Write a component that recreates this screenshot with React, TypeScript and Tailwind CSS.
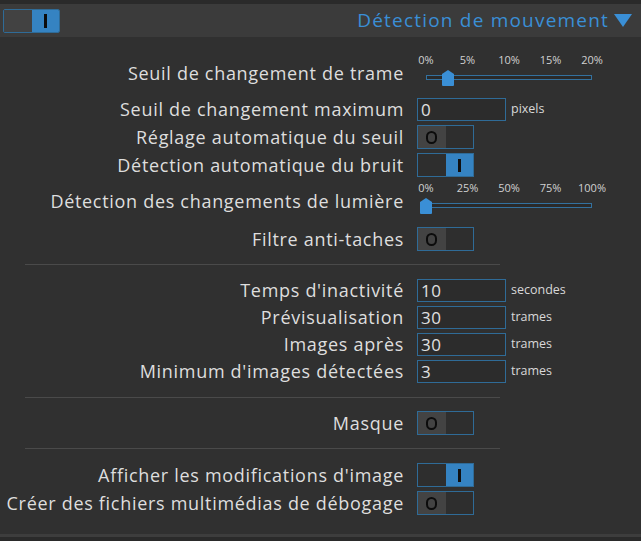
import React from 'react';

const font = "font-['Open_Sans','DejaVu_Sans',sans-serif]";

const Toggle: React.FC<{ on?: boolean; className?: string }> = ({ on, className }) => (
  <div className={`flex h-[24px] w-[57px] border border-[#2f6b97] ${className ?? ''}`}>
    {on ? (
      <>
        <div className="w-1/2 bg-[#2e2e2e]" />
        <div className="flex w-1/2 items-center justify-center bg-[#3583c2]">
          <div className="h-[13px] w-[3px] bg-[#101010]" />
        </div>
      </>
    ) : (
      <>
        <div className="flex w-1/2 items-center justify-center bg-[#434343]">
          <div className="h-[13px] w-[11px] rounded-full border-[2px] border-[#0c0c0c]" />
        </div>
        <div className="w-1/2 bg-[#2e2e2e]" />
      </>
    )}
  </div>
);

const Slider: React.FC<{ ticks: string[]; value: number }> = ({ ticks, value }) => (
  <div className="w-[190px] pl-[9px]">
    <div className="relative h-[14px] w-[166px] text-[11px] leading-[14px] text-[#d0d0d0]">
      {ticks.map((t, i) => (
        <span
          key={t}
          className="absolute top-0 -translate-x-1/2 whitespace-nowrap"
          style={{ left: `${(i / (ticks.length - 1)) * 100}%` }}
        >
          {t}
        </span>
      ))}
    </div>
    <div className="relative mt-[3px] flex h-[16px] w-[166px] items-center">
      <div className="h-[5px] w-full border border-[#33719f] bg-[#2a2a2a]" />
      <svg
        className="absolute top-0 -translate-x-1/2"
        style={{ left: `${value}%` }}
        width="12"
        height="16"
        viewBox="0 0 12 16"
      >
        <path d="M6 0 L12 4 L12 15 Q12 16 11 16 L1 16 Q0 16 0 15 L0 4 Z" fill="#3a8fd6" />
      </svg>
    </div>
  </div>
);

const Input: React.FC<{ value: string; unit: string }> = ({ value, unit }) => (
  <div className="flex items-center">
    <div className="flex h-[23px] w-[89px] items-center border border-[#2f6b97] bg-[#2c2c2c] px-[3px] text-[17px] tracking-[0.5px] text-[#e0e0e0]">
      {value}
    </div>
    <span className="ml-[5px] text-[12.5px] text-[#d8d8d8]">{unit}</span>
  </div>
);

const Row: React.FC<{ label: string; children: React.ReactNode; className?: string; labelClass?: string }> = ({
  label,
  children,
  className,
  labelClass,
}) => (
  <div className={`flex items-center ${className ?? ''}`}>
    <div
      className={`w-[405px] shrink-0 whitespace-nowrap pr-[1px] text-right text-[18px] tracking-[0.7px] text-[#dedede] ${labelClass ?? ''}`}
    >
      {label}
    </div>
    <div className="pl-[12px]">{children}</div>
  </div>
);

const Divider: React.FC<{ className?: string }> = ({ className }) => (
  <div className={`mx-[25px] h-px w-[475px] bg-[#4a4a4a] ${className ?? ''}`} />
);

export default function App() {
  return (
    <div className={`h-[541px] w-[641px] overflow-hidden bg-[#2a2a2a] ${font}`}>
      <div className="h-[4px]" />
      <div className="flex h-[33px] items-center justify-between bg-[#3b3b3b] pl-[3px] pr-[9px]">
        <div className="flex h-[24px] w-[57px] overflow-hidden rounded-[2px] border border-[#2f6b97]">
          <div className="w-1/2 bg-[#424242]" />
          <div className="flex w-1/2 items-center justify-center bg-[#3583c2]">
            <div className="h-[14px] w-[3px] bg-[#0c0c0c]" />
          </div>
        </div>
        <div className="flex items-center gap-[5px] text-[19px] tracking-[1.2px] text-[#3a8fd6]">
          <span>Détection de mouvement</span>
          <svg width="18" height="13" viewBox="0 0 18 13">
            <path d="M0 0 L18 0 L9 13 Z" fill="#3a8fd6" />
          </svg>
        </div>
      </div>
      <div className="flex h-[497px] flex-col bg-[#303030] pt-[15px]">
        <Row label="Seuil de changement de trame" className="h-[34px]" labelClass="pt-[8px]">
          <Slider ticks={['0%', '5%', '10%', '15%', '20%']} value={13.5} />
        </Row>
        <Row label="Seuil de changement maximum" className="mt-[12px] h-[23px]">
          <Input value="0" unit="pixels" />
        </Row>
        <Row label="Réglage automatique du seuil" className="mt-[4px] h-[24px]">
          <Toggle />
        </Row>
        <Row label="Détection automatique du bruit" className="mt-[4px] h-[24px]">
          <Toggle on />
        </Row>
        <Row label="Détection des changements de lumière" className="mt-[3px] h-[34px]" labelClass="pt-[8px]">
          <Slider ticks={['0%', '25%', '50%', '75%', '100%']} value={0} />
        </Row>
        <Row label="Filtre anti-taches" className="mt-[13px] h-[24px]">
          <Toggle />
        </Row>
        <Divider className="mt-[13px]" />
        <Row label="Temps d'inactivité" className="mt-[14px] h-[23px]">
          <Input value="10" unit="secondes" />
        </Row>
        <Row label="Prévisualisation" className="mt-[4px] h-[23px]">
          <Input value="30" unit="trames" />
        </Row>
        <Row label="Images après" className="mt-[4px] h-[23px]">
          <Input value="30" unit="trames" />
        </Row>
        <Row label="Minimum d'images détectées" className="mt-[4px] h-[23px]">
          <Input value="3" unit="trames" />
        </Row>
        <Divider className="mt-[14px]" />
        <Row label="Masque" className="mt-[13px] h-[24px]">
          <Toggle />
        </Row>
        <Divider className="mt-[13px]" />
        <Row label="Afficher les modifications d'image" className="mt-[14px] h-[24px]">
          <Toggle on />
        </Row>
        <Row label="Créer des fichiers multimédias de débogage" className="mt-[4px] h-[24px]">
          <Toggle />
        </Row>
      </div>
      <div className="h-[3px] bg-[#3d3d3d]" />
    </div>
  );
}
